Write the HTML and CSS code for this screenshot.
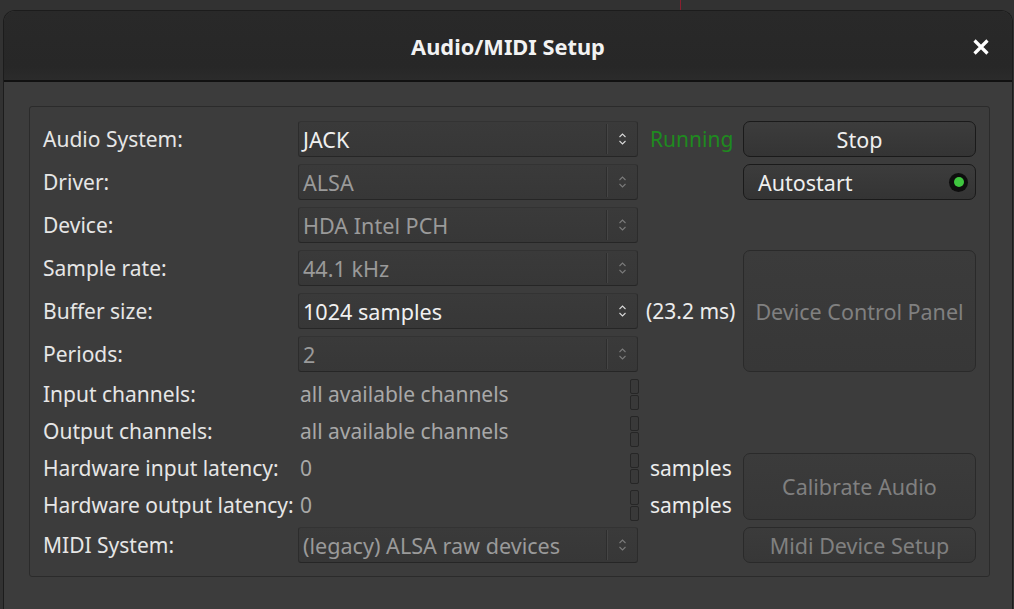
FILE: index.html
```html
<!DOCTYPE html>
<html>
<head>
<meta charset="utf-8">
<link rel="stylesheet" href="styles.css">
</head>
<body>
<div class="bgline"></div>
<div class="window">
  <div class="titlebar">
    <div class="title">Audio/MIDI Setup</div>
    <div class="close">
      <svg width="18" height="18" viewBox="0 0 18 18"><path d="M2.5 2.5 L15.5 15.5 M15.5 2.5 L2.5 15.5" stroke="#fff" stroke-width="3.2" stroke-linecap="butt"/></svg>
    </div>
  </div>
  <div class="content">
    <div class="frame">
      <div class="grid">
        <div class="label r1">Audio System:</div>
        <div class="combo r1"><span class="val">JACK</span><span class="arrow"><svg width="9" height="16" viewBox="0 0 9 16"><path d="M1.5 6 L4.5 3 L7.5 6 M1.5 10 L4.5 13 L7.5 10" fill="none" stroke="#d8d8d8" stroke-width="1.1"/></svg></span></div>
        <div class="status r1">Running</div>
        <div class="btn r1 b-stop">Stop</div>

        <div class="label r2">Driver:</div>
        <div class="combo dis r2"><span class="val">ALSA</span><span class="arrow"><svg width="9" height="16" viewBox="0 0 9 16"><path d="M1.5 6 L4.5 3 L7.5 6 M1.5 10 L4.5 13 L7.5 10" fill="none" stroke="#7a7a7a" stroke-width="1.1"/></svg></span></div>
        <div class="btn r2 b-auto"><span>Autostart</span><span class="led"><span class="led-in"></span></span></div>

        <div class="label r3">Device:</div>
        <div class="combo dis r3"><span class="val">HDA Intel PCH</span><span class="arrow"><svg width="9" height="16" viewBox="0 0 9 16"><path d="M1.5 6 L4.5 3 L7.5 6 M1.5 10 L4.5 13 L7.5 10" fill="none" stroke="#7a7a7a" stroke-width="1.1"/></svg></span></div>

        <div class="label r4">Sample rate:</div>
        <div class="combo dis r4"><span class="val">44.1 kHz</span><span class="arrow"><svg width="9" height="16" viewBox="0 0 9 16"><path d="M1.5 6 L4.5 3 L7.5 6 M1.5 10 L4.5 13 L7.5 10" fill="none" stroke="#7a7a7a" stroke-width="1.1"/></svg></span></div>
        <div class="btn dis b-dcp">Device Control Panel</div>

        <div class="label r5">Buffer size:</div>
        <div class="combo r5"><span class="val">1024 samples</span><span class="arrow"><svg width="9" height="16" viewBox="0 0 9 16"><path d="M1.5 6 L4.5 3 L7.5 6 M1.5 10 L4.5 13 L7.5 10" fill="none" stroke="#d8d8d8" stroke-width="1.1"/></svg></span></div>
        <div class="extra r5 ms">(23.2 ms)</div>

        <div class="label r6">Periods:</div>
        <div class="combo dis r6"><span class="val">2</span><span class="arrow"><svg width="9" height="16" viewBox="0 0 9 16"><path d="M1.5 6 L4.5 3 L7.5 6 M1.5 10 L4.5 13 L7.5 10" fill="none" stroke="#7a7a7a" stroke-width="1.1"/></svg></span></div>

        <div class="label r7">Input channels:</div>
        <div class="entry r7"><span class="val">all available channels</span><span class="spin"><i></i><i></i></span></div>

        <div class="label r8">Output channels:</div>
        <div class="entry r8"><span class="val">all available channels</span><span class="spin"><i></i><i></i></span></div>

        <div class="label r9">Hardware input latency:</div>
        <div class="entry r9"><span class="val">0</span><span class="spin"><i></i><i></i></span></div>
        <div class="extra r9">samples</div>
        <div class="btn dis b-cal">Calibrate Audio</div>

        <div class="label r10">Hardware output latency:</div>
        <div class="entry r10"><span class="val">0</span><span class="spin"><i></i><i></i></span></div>
        <div class="extra r10">samples</div>

        <div class="label r11">MIDI System:</div>
        <div class="combo dis r11"><span class="val">(legacy) ALSA raw devices</span><span class="arrow"><svg width="9" height="16" viewBox="0 0 9 16"><path d="M1.5 6 L4.5 3 L7.5 6 M1.5 10 L4.5 13 L7.5 10" fill="none" stroke="#7a7a7a" stroke-width="1.1"/></svg></span></div>
        <div class="btn dis r11 b-midi">Midi Device Setup</div>
      </div>
    </div>
  </div>
</div>
</body>
</html>
```
FILE: styles.css
```css
* { box-sizing: border-box; }
html, body { margin: 0; padding: 0; }
body {
  background: #323232;
  width: 1014px;
  height: 609px;
  overflow: hidden;
  font-family: "Noto Sans", "DejaVu Sans", sans-serif;
  font-size: 21px;
  color: #e6e6e6;
  position: relative;
}
.bgline {
  position: absolute;
  left: 680px;
  top: 0;
  width: 1px;
  height: 10px;
  background: #8a1f2f;
}
.window {
  margin: 10px 0 0 3px;
  width: 1010px;
  height: 599px;
  border-radius: 12px 12px 0 0;
  border: 1px solid #1c1c1c;
  border-bottom: none;
  background: #3c3c3c;
  overflow: hidden;
  display: flex;
  flex-direction: column;
}
.titlebar {
  height: 71px;
  flex: none;
  background: linear-gradient(#292929, #272727 80%, #2b2b2b);
  border-bottom: 2px solid #111;
  display: flex;
  align-items: center;
  justify-content: center;
  position: relative;
}
.title {
  font-weight: bold;
  color: #f2f2f2;
  font-size: 21.8px;
  padding-top: 2px;
}
.close {
  position: absolute;
  right: 22px;
  top: 27px;
  width: 18px;
  height: 18px;
}
.close svg { display: block; }
.content {
  padding: 24px 0 0 25px;
}
.frame {
  width: 961px;
  height: 471px;
  border: 1px solid #2b2b2b;
  border-radius: 3px;
  padding: 14px 13px 0 13px;
}
.grid {
  display: grid;
  grid-template-columns: 255px 341px 104px 233px;
  grid-template-rows: repeat(6, 36px) repeat(4, 30px) 36px;
  row-gap: 7px;
}
.label {
  grid-column: 1;
  display: flex;
  align-items: center;
  color: #e6e6e6;
  white-space: nowrap;
}
.r1 { grid-row: 1; } .r2 { grid-row: 2; } .r3 { grid-row: 3; }
.r4 { grid-row: 4; } .r5 { grid-row: 5; } .r6 { grid-row: 6; }
.r7 { grid-row: 7; } .r8 { grid-row: 8; } .r9 { grid-row: 9; }
.r10 { grid-row: 10; } .r11 { grid-row: 11; }

.combo {
  grid-column: 2;
  margin-right: 1px;
  display: flex;
  align-items: stretch;
  background: linear-gradient(#3a3a3a, #373737);
  border: 1px solid #2c2c2c;
  border-top-color: #333;
  border-bottom-color: #262626;
  border-radius: 3px;
  color: #f0f0f0;
  font-size: 21.6px;
}
.combo .val {
  flex: 1;
  display: flex;
  align-items: center;
  padding-left: 4px;
  white-space: nowrap;
}
.combo .arrow {
  width: 31px;
  display: flex;
  align-items: center;
  justify-content: center;
  border-left: 1px solid #2d2d2d;
  box-shadow: inset 1px 0 0 #454545;
  margin: 2px 0;
}
.combo .arrow svg { display: block; }
.combo.dis { color: #9a9a9a; }

.entry {
  grid-column: 2;
  display: flex;
  align-items: center;
  color: #a8a8a8;
}
.entry .val { flex: 1; padding-left: 2px; }
.spin {
  width: 9px;
  height: 31px;
  display: flex;
  flex-direction: column;
  gap: 1px;
  align-self: center;
}
.spin i {
  flex: 1;
  border: 1px solid #262626;
  border-radius: 2px;
  background: #393939;
}

.status {
  grid-column: 3;
  display: flex;
  align-items: center;
  padding-left: 11px;
  color: #1f8a1f;
}
.extra {
  grid-column: 3;
  display: flex;
  align-items: center;
  padding-left: 11px;
  color: #ececec;
}
.extra.ms { padding-left: 7px; }

.btn {
  grid-column: 4;
  display: flex;
  align-items: center;
  justify-content: center;
  border: 1px solid #1a1a1a;
  border-radius: 7px;
  background: linear-gradient(#3c3c3c, #343434);
  color: #efefef;
  white-space: nowrap;
  font-size: 21.5px;
}
.btn.dis {
  border-color: #2a2a2a;
  background: linear-gradient(#3b3b3b, #373737);
  color: #808080;
}
.b-auto {
  justify-content: space-between;
  padding: 0 7px 0 14px;
}
.led {
  width: 19px;
  height: 19px;
  border-radius: 50%;
  background: #0e0e0e;
  display: flex;
  align-items: center;
  justify-content: center;
}
.led-in {
  width: 10px;
  height: 10px;
  border-radius: 50%;
  background: #3fc63f;
}
.b-dcp { grid-row: 4 / 7; }
.b-cal { grid-row: 9 / 11; }
```
